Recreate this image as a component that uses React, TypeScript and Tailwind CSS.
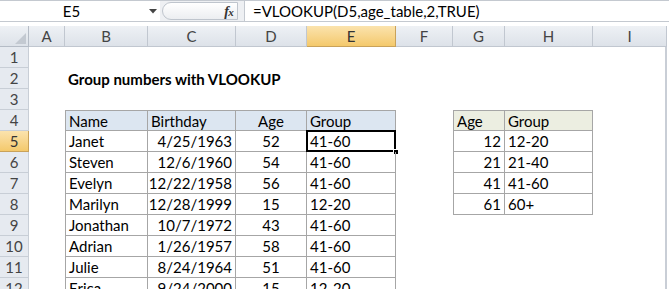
import React from 'react';

type Cell = { v: string; align?: 'l' | 'r' | 'c'; bold?: boolean };

const COLS = ['A', 'B', 'C', 'D', 'E', 'F', 'G', 'H', 'I'];

const people: [string, string, string, string][] = [
  ['Janet', '4/25/1963', '52', '41-60'],
  ['Steven', '12/6/1960', '54', '41-60'],
  ['Evelyn', '12/22/1958', '56', '41-60'],
  ['Marilyn', '12/28/1999', '15', '12-20'],
  ['Jonathan', '10/7/1972', '43', '41-60'],
  ['Adrian', '1/26/1957', '58', '41-60'],
  ['Julie', '8/24/1964', '51', '41-60'],
  ['Erica', '9/24/2000', '15', '12-20'],
];

const ageTable: [string, string][] = [
  ['12', '12-20'],
  ['21', '21-40'],
  ['41', '41-60'],
  ['61', '60+'],
];

// sheet contents keyed by row then column letter
const sheet: Record<number, Record<string, Cell>> = {
  2: { B: { v: 'Group numbers with VLOOKUP', bold: true } },
  4: {
    B: { v: 'Name' },
    C: { v: 'Birthday' },
    D: { v: 'Age', align: 'c' },
    E: { v: 'Group' },
    G: { v: 'Age' },
    H: { v: 'Group' },
  },
};
people.forEach((p, i) => {
  sheet[5 + i] = {
    B: { v: p[0] },
    C: { v: p[1], align: 'r' },
    D: { v: p[2], align: 'c' },
    E: { v: p[3] },
  };
});
ageTable.forEach((a, i) => {
  sheet[5 + i].G = { v: a[0], align: 'r' };
  sheet[5 + i].H = { v: a[1] };
});

const inRange = (r: number, c: number, r0: number, r1: number, c0: number, c1: number) =>
  r >= r0 && r <= r1 && c >= c0 && c <= c1;

function SheetCell({ row, col }: { row: number; col: number }) {
  const letter = COLS[col];
  const cell = sheet[row]?.[letter];
  const main = inRange(row, col, 4, 12, 1, 4);
  const lookup = inRange(row, col, 4, 8, 6, 7);
  const boxed = main || lookup;
  const top = boxed && row === 4;
  const left = (main && col === 1) || (lookup && col === 6);
  const selected = row === 5 && letter === 'E';

  return (
    <div
      className={[
        'relative h-[21px] flex items-center px-[3px] whitespace-nowrap text-black',
        boxed ? 'border-r border-b border-[#a6a6a6]' : '',
        top ? 'border-t' : '',
        left ? 'border-l' : '',
        main && row === 4 ? 'bg-[#dce6f1]' : '',
        lookup && row === 4 ? 'bg-[#eceee1]' : '',
        cell?.align === 'r' ? 'justify-end' : '',
        cell?.align === 'c' ? 'justify-center' : '',
      ].join(' ')}
    >
      {cell && <span className={cell.bold ? 'pt-[1px] font-bold' : 'pt-[1px]'}>{cell.v}</span>}
      {selected && (
        <>
          <div className="absolute left-[-1px] top-[-1px] right-[-1px] bottom-[-1px] border-2 border-black" />
          <div className="absolute right-[-4px] bottom-[-4px] w-[6px] h-[6px] bg-black border border-white" />
        </>
      )}
    </div>
  );
}

export default function App() {
  const rows = Array.from({ length: 12 }, (_, i) => i + 1);

  return (
    <div className="w-[669px] h-[289px] overflow-hidden bg-white text-[15px] font-['Lato','Liberation_Sans',sans-serif]">
      {/* formula bar */}
      <div className="flex h-[22px] border-t border-b border-[#c4c9d0] bg-white">
        <div className="w-[160px] flex items-center">
          <span className="w-[143px] text-center text-black pt-[1px]">E5</span>
          <svg width="8" height="5" viewBox="0 0 8 5" className="ml-[6px]">
            <path d="M0 0 H8 L4 4.5 Z" fill="#444" />
          </svg>
        </div>
        <div className="w-[85px] flex items-center bg-[#eef0f3] border-r border-[#c4c9d0]">
          <div className="w-[76px] h-[18px] ml-[2px] rounded-l-full border border-[#bfc5cd] bg-gradient-to-b from-white to-[#eceef1] flex items-center justify-end pr-[4px]">
            <span className="font-['Liberation_Serif',serif] italic font-bold text-[14px] text-[#333] tracking-tighter">
              f<span className="text-[11px]">x</span>
            </span>
          </div>
        </div>
        <div className="flex-1 flex items-center pl-[8px] text-black whitespace-nowrap">
          <span className="pt-[1px]">=VLOOKUP(D5,age_table,2,TRUE)</span>
        </div>
      </div>
      <div className="h-[4px]" />

      {/* sheet */}
      <div className="border-r-2 border-[#c9ced6] w-[667px]">
        <div className="grid grid-cols-[29px_36px_83px_88px_71px_89px_57px_52px_88px_74px]">
          {/* column headers */}
          <div className="h-[21px] bg-gradient-to-b from-[#eef1f5] to-[#dde2e9] border-r border-b border-[#b5bcc6] flex items-end justify-end p-[2px]">
            <svg width="11" height="11" viewBox="0 0 11 11">
              <path d="M11 0 V11 H0 Z" fill="#c3c9d1" />
            </svg>
          </div>
          {COLS.map((c) => (
            <div
              key={c}
              className={
                c === 'E'
                  ? 'h-[21px] flex items-center justify-center bg-gradient-to-b from-[#fbe3ad] to-[#f4c96b] border-r border-b border-[#c9a25a] text-[#333]'
                  : 'h-[21px] flex items-center justify-center bg-gradient-to-b from-[#eef1f5] to-[#dde2e9] border-r border-b border-[#c1c7d0] text-[#444]'
              }
            >
              <span className="pt-[1px]">{c}</span>
            </div>
          ))}

          {rows.map((r) => (
            <React.Fragment key={r}>
              <div
                className={
                  r === 5
                    ? 'h-[21px] flex items-center justify-center bg-gradient-to-b from-[#fbe3ad] to-[#f4c96b] border-r border-b border-[#c9a25a] text-[#333]'
                    : 'h-[21px] flex items-center justify-center bg-[#e6eaf0] border-r border-b border-[#c8ced6] text-[#444]'
                }
              >
                <span className="pt-[1px]">{r}</span>
              </div>
              {COLS.map((_, ci) => (
                <SheetCell key={ci} row={r} col={ci} />
              ))}
            </React.Fragment>
          ))}
        </div>
      </div>
    </div>
  );
}
